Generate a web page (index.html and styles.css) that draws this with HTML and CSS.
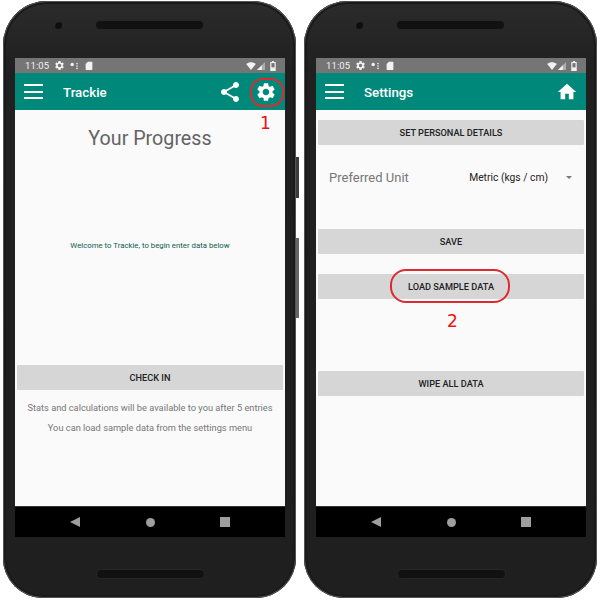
FILE: index.html
```html
<!DOCTYPE html>
<html lang="en">
<head>
    <meta charset="UTF-8">
    <meta name="viewport" content="width=device-width, initial-scale=1.0">
    <title>Trackie</title>
    <link rel="stylesheet" href="styles.css">
</head>
<body>
    <svg class="defs" width="0" height="0">
        <symbol id="i-gear" viewBox="0 0 24 24"><path d="M19.14 12.94c.04-.3.06-.61.06-.94 0-.32-.02-.64-.07-.94l2.03-1.58c.18-.14.23-.41.12-.61l-1.92-3.32c-.12-.22-.37-.29-.59-.22l-2.39.96c-.5-.38-1.03-.7-1.62-.94l-.36-2.54c-.04-.24-.24-.41-.48-.41h-3.84c-.24 0-.43.17-.47.41l-.36 2.54c-.59.24-1.13.57-1.62.94l-2.39-.96c-.22-.08-.47 0-.59.22L2.74 8.87c-.12.21-.08.47.12.61l2.03 1.58c-.05.3-.09.63-.09.94s.02.64.07.94l-2.03 1.58c-.18.14-.23.41-.12.61l1.92 3.32c.12.22.37.29.59.22l2.39-.96c.5.38 1.03.7 1.62.94l.36 2.54c.05.24.24.41.48.41h3.84c.24 0 .44-.17.47-.41l.36-2.54c.59-.24 1.13-.56 1.62-.94l2.39.96c.22.08.47 0 .59-.22l1.92-3.32c.12-.22.07-.47-.12-.61l-2.01-1.58zM12 15.6c-1.98 0-3.6-1.62-3.6-3.6s1.62-3.6 3.6-3.6 3.6 1.62 3.6 3.6-1.62 3.6-3.6 3.6z"/></symbol>
        <symbol id="i-share" viewBox="0 0 24 24"><path d="M18 16.08c-.76 0-1.44.3-1.96.77L8.91 12.7c.05-.23.09-.46.09-.7s-.04-.47-.09-.7l7.05-4.11c.54.5 1.25.81 2.04.81 1.66 0 3-1.34 3-3s-1.34-3-3-3-3 1.34-3 3c0 .24.04.47.09.7L8.04 9.81C7.5 9.31 6.79 9 6 9c-1.66 0-3 1.34-3 3s1.34 3 3 3c.79 0 1.5-.31 2.04-.81l7.12 4.16c-.05.21-.08.43-.08.65 0 1.61 1.31 2.92 2.92 2.92 1.61 0 2.92-1.31 2.92-2.92s-1.31-2.92-2.92-2.92z"/></symbol>
        <symbol id="i-home" viewBox="0 0 24 24"><path d="M10 20v-6h4v6h5v-8h3L12 3 2 12h3v8z"/></symbol>
        <symbol id="i-dots" viewBox="0 0 12 10"><circle cx="2.5" cy="3" r="2.2"/><circle cx="8.5" cy="2" r="1"/><circle cx="8.5" cy="5" r="1"/><circle cx="8.5" cy="8" r="1"/></symbol>
        <symbol id="i-sd" viewBox="0 0 10 12"><path d="M3.5 1H8.5a1 1 0 0 1 1 1v9a1 1 0 0 1-1 1H1.5a1 1 0 0 1-1-1V4z"/></symbol>
        <symbol id="i-wifi" viewBox="0 0 12 10"><path d="M0 2.5C3.5-.5 8.500-.5 12 2.500L6 10z"/></symbol>
        <symbol id="i-signal" viewBox="0 0 10 10"><path d="M10 0V10H0z" opacity=".45"/><path d="M6 4V10H0z"/></symbol>
        <symbol id="i-battery" viewBox="0 0 6 11"><path d="M2 0H4V1H6V11H0V1H2z"/><path d="M1.300 2.300H4.700V7H1.300z" fill="#757575"/></symbol>
    </svg>

    <div class="phones">
        <div class="phone">
            <div class="side-btn power"></div>
            <div class="side-btn volume"></div>
            <div class="bezel-top">
                <span class="camera"></span>
                <span class="speaker"></span>
            </div>
            <div class="screen">
                <div class="status-bar">
                    <span class="time">11:05</span>
                    <svg class="st-gear"><use href="#i-gear"/></svg>
                    <svg class="st-dots"><use href="#i-dots"/></svg>
                    <svg class="st-sd"><use href="#i-sd"/></svg>
                    <span class="status-right">
                        <svg class="st-wifi"><use href="#i-wifi"/></svg>
                        <svg class="st-signal"><use href="#i-signal"/></svg>
                        <svg class="st-battery"><use href="#i-battery"/></svg>
                    </span>
                </div>
                <div class="app-bar">
                    <span class="menu"><i></i><i></i><i></i></span>
                    <span class="app-title">Trackie</span>
                    <span class="app-actions">
                        <svg class="icon-share"><use href="#i-share"/></svg>
                        <svg class="icon-gear"><use href="#i-gear"/></svg>
                    </span>
                </div>
                <div class="content">
                    <h1>Your Progress</h1>
                    <p class="welcome">Welcome to Trackie, to begin enter data below</p>
                    <div class="btn check-in">CHECK IN</div>
                    <p class="note">Stats and calculations will be available to you after 5 entries</p>
                    <p class="note">You can load sample data from the settings menu</p>
                </div>
                <div class="nav-bar">
                    <span class="nav-back"></span>
                    <span class="nav-home"></span>
                    <span class="nav-recent"></span>
                </div>
                <!-- annotations -->
                <span class="mark mark-gear"></span>
                <span class="mark-num num-1">1</span>
            </div>
            <div class="bezel-bottom"><span class="speaker"></span></div>
        </div>

        <div class="phone">
            <div class="bezel-top">
                <span class="camera"></span>
                <span class="speaker"></span>
            </div>
            <div class="screen">
                <div class="status-bar">
                    <span class="time">11:05</span>
                    <svg class="st-gear"><use href="#i-gear"/></svg>
                    <svg class="st-dots"><use href="#i-dots"/></svg>
                    <svg class="st-sd"><use href="#i-sd"/></svg>
                    <span class="status-right">
                        <svg class="st-wifi"><use href="#i-wifi"/></svg>
                        <svg class="st-signal"><use href="#i-signal"/></svg>
                        <svg class="st-battery"><use href="#i-battery"/></svg>
                    </span>
                </div>
                <div class="app-bar">
                    <span class="menu"><i></i><i></i><i></i></span>
                    <span class="app-title">Settings</span>
                    <span class="app-actions">
                        <svg class="icon-gear"><use href="#i-home"/></svg>
                    </span>
                </div>
                <div class="content settings">
                    <div class="btn">SET PERSONAL DETAILS</div>
                    <div class="unit-row">
                        <span class="unit-label">Preferred Unit</span>
                        <span class="unit-value">Metric (kgs / cm)</span>
                        <span class="unit-arrow"></span>
                    </div>
                    <div class="btn save">SAVE</div>
                    <div class="btn load">LOAD SAMPLE DATA</div>
                    <div class="btn wipe">WIPE ALL DATA</div>
                </div>
                <div class="nav-bar">
                    <span class="nav-back"></span>
                    <span class="nav-home"></span>
                    <span class="nav-recent"></span>
                </div>
                <!-- annotations -->
                <span class="mark mark-load"></span>
                <span class="mark-num num-2">2</span>
            </div>
            <div class="bezel-bottom"><span class="speaker"></span></div>
        </div>
    </div>
</body>
</html>
```

FILE: styles.css
```css
/* General */
body {
    margin: 0;
    background: #fff;
    font-family: Roboto, "Liberation Sans", sans-serif;
}

.defs {
    position: absolute;
}

.phones {
    display: flex;
    gap: 8px;
    padding: 1px 0 0 3px;
}

/* Phone body */
.phone {
    position: relative;
    width: 293px;
    height: 597px;
    box-sizing: border-box;
    padding: 0 11px 0 12px;
    border-radius: 44px 44px 40px 40px;
    background: linear-gradient(#2b2b2b, #202020 12%, #1f1f1f);
    box-shadow: inset 0 0 0 1px #555, inset 0 0 0 3px #1a1a1a;
}

.side-btn {
    position: absolute;
    left: 293px;
    width: 3px;
    background: #3c3c3c;
}

.power {
    top: 156px;
    height: 41px;
}

.volume {
    top: 237px;
    height: 80px;
    background: #666;
}

.bezel-top {
    display: flex;
    align-items: center;
    gap: 34px;
    height: 57px;
    padding: 0 0 9px 39px;
    box-sizing: border-box;
}

.camera {
    width: 8px;
    height: 8px;
    border-radius: 50%;
    background: #0e0e0e;
    box-shadow: inset 1px 1px 1px #333;
}

.speaker {
    display: block;
    width: 107px;
    height: 8px;
    border-radius: 4px;
    background: #111;
    box-shadow: 0 0 0 1px #262626;
}

.bezel-bottom {
    display: flex;
    justify-content: center;
    padding-top: 33px;
}

/* Screen */
.screen {
    position: relative;
    width: 270px;
    height: 479px;
    display: flex;
    flex-direction: column;
    background: #fafafa;
}

.status-bar {
    display: flex;
    align-items: center;
    flex: none;
    height: 15px;
    padding: 0 9px 0 10px;
    background: #757575;
    color: #f2f2f2;
}

.status-bar svg {
    fill: #f2f2f2;
}

.time {
    width: 30px;
    font-size: 9.500px;
    letter-spacing: .1px;
}

.st-gear {
    width: 11px;
    height: 11px;
    margin-left: -1px;
}

.st-dots {
    width: 10px;
    height: 8px;
    margin-left: 5px;
}

.st-sd {
    width: 8px;
    height: 9px;
    margin-left: 5px;
}

.status-right {
    display: flex;
    align-items: center;
    margin-left: auto;
    gap: 1px;
}

.st-wifi {
    width: 10px;
    height: 8px;
}

.st-signal {
    width: 8px;
    height: 8px;
}

.st-battery {
    width: 6px;
    height: 10px;
    margin-left: 4px;
}

.app-bar {
    display: flex;
    align-items: center;
    flex: none;
    height: 37px;
    padding: 0 8px 0 9px;
    background: #00897b;
    color: #fff;
}

.menu {
    display: flex;
    flex-direction: column;
    gap: 4.500px;
    width: 19px;
}

.menu i {
    display: block;
    height: 2px;
    background: #fff;
}

.app-title {
    margin-left: 20px;
    padding-top: 2px;
    font-size: 13.300px;
    font-weight: 500;
}

.app-actions {
    display: flex;
    align-items: center;
    gap: 13px;
    margin-left: auto;
}

.app-actions svg {
    fill: #fff;
}

.icon-share {
    width: 24px;
    height: 24px;
}

.icon-gear {
    width: 22px;
    height: 22px;
}

/* Content */
.content {
    flex: 1;
    padding: 0 2px;
    text-align: center;
}

h1 {
    margin: 16px 0 0;
    font-size: 19.700px;
    font-weight: 400;
    line-height: 26px;
    color: #636363;
}

.welcome {
    margin: 88px 0 0;
    height: 125px;
    font-size: 7.800px;
    line-height: 12px;
    color: #0f5a4e;
}

.btn {
    height: 25px;
    line-height: 26px;
    background: #d6d6d6;
    font-size: 9.200px;
    font-weight: 500;
    text-align: center;
    color: #222;
    border-radius: 1px;
}

.note {
    margin: 10px 0 0;
    font-size: 9.250px;
    line-height: 12px;
    color: #777;
}

.check-in + .note {
    margin-top: 12px;
}

.note + .note {
    margin-top: 8px;
}

/* Settings */
.settings {
    padding-top: 10px;
}

.unit-row {
    display: flex;
    align-items: center;
    height: 64px;
    padding: 0 12px 0 11px;
}

.unit-label {
    font-size: 13px;
    color: #777;
}

.unit-value {
    margin-left: auto;
    font-size: 10.300px;
    color: #222;
}

.unit-arrow {
    margin-left: 18px;
    border-top: 3px solid #777;
    border-left: 3.500px solid transparent;
    border-right: 3.500px solid transparent;
}

.save {
    margin-top: 20px;
}

.load {
    margin-top: 20px;
}

.wipe {
    margin-top: 72px;
}

/* Navigation */
.nav-bar {
    display: flex;
    align-items: center;
    justify-content: space-between;
    flex: none;
    height: 31px;
    padding: 0 55px;
    background: #000;
    border-top: 1px solid #333;
    box-sizing: border-box;
}

.nav-back {
    border-right: 10px solid #9e9e9e;
    border-top: 5px solid transparent;
    border-bottom: 5px solid transparent;
}

.nav-home {
    width: 9px;
    height: 9px;
    border-radius: 50%;
    background: #9e9e9e;
}

.nav-recent {
    width: 10px;
    height: 10px;
    background: #9e9e9e;
}

/* Red annotations */
.mark {
    position: absolute;
    box-sizing: border-box;
    border: 2px solid #dc2a30;
}

.mark-gear {
    left: 235px;
    top: 20px;
    width: 34px;
    height: 29px;
    border-radius: 13px;
}

.mark-load {
    left: 74px;
    top: 211px;
    width: 120px;
    height: 34px;
    border-radius: 16px;
}

.mark-num {
    position: absolute;
    font-family: "DejaVu Sans", sans-serif;
    font-size: 17px;
    line-height: 20px;
    color: #f01010;
}

.num-1 {
    left: 245px;
    top: 55px;
}

.num-2 {
    left: 131px;
    top: 253px;
}
```
